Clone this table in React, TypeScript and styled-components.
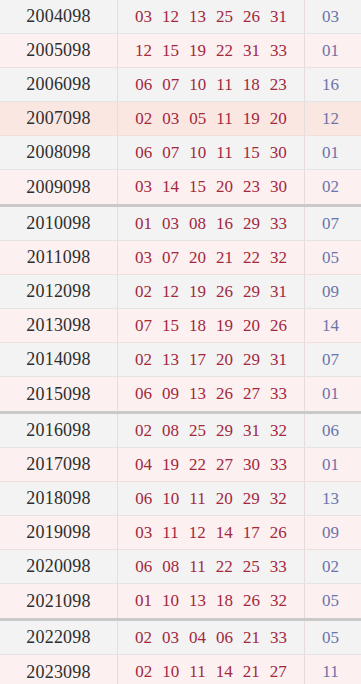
import React from "react";
import styled, { createGlobalStyle } from "styled-components";

type Tone = "gray" | "pink" | "peach";

interface Draw {
  issue: string;
  reds: string[];
  blue: string;
  hot?: boolean;
}

const GlobalStyle = createGlobalStyle`
  html, body {
    margin: 0;
    padding: 0;
    background: #ffffff;
    overflow: hidden;
  }
`;

const Table = styled.div`
  width: 361px;
  font-family: "Liberation Serif", "Noto Sans CJK SC", serif;
  font-size: 17px;
`;

const Group = styled.div`
  & + & {
    border-top: 3px solid #c9c9c9;
  }
`;

const toneColor = (tone: Tone) =>
  tone === "peach" ? "#fbe7e2" : tone === "pink" ? "#fdf0f0" : "#f3f3f3";

const Row = styled.div<{ $tone: Tone }>`
  display: grid;
  grid-template-columns: 118px 187px 1fr;
  height: 34px;
  box-sizing: border-box;
  background: ${(p) => toneColor(p.$tone)};
  border-bottom: 1px solid ${(p) => (p.$tone === "gray" ? "#e4e4e4" : "#f1dede")};

  ${Group} &:last-child {
    border-bottom: none;
  }
`;

const Cell = styled.div`
  display: flex;
  align-items: center;
  justify-content: center;
  border-right: 1px solid #e6dcdc;

  &:last-child {
    border-right: none;
  }
`;

const Issue = styled(Cell)`
  color: #2e2e2e;
  font-size: 18px;
  letter-spacing: 0.2px;
`;

const Reds = styled(Cell)`
  gap: 10px;
  color: #a2283e;
`;

const Blue = styled(Cell)`
  padding-right: 5px;
  color: #6c74aa;
`;

const groups: Draw[][] = [
  [
    { issue: "2004098", reds: ["03", "12", "13", "25", "26", "31"], blue: "03" },
    { issue: "2005098", reds: ["12", "15", "19", "22", "31", "33"], blue: "01" },
    { issue: "2006098", reds: ["06", "07", "10", "11", "18", "23"], blue: "16" },
    { issue: "2007098", reds: ["02", "03", "05", "11", "19", "20"], blue: "12", hot: true },
    { issue: "2008098", reds: ["06", "07", "10", "11", "15", "30"], blue: "01" },
    { issue: "2009098", reds: ["03", "14", "15", "20", "23", "30"], blue: "02" },
  ],
  [
    { issue: "2010098", reds: ["01", "03", "08", "16", "29", "33"], blue: "07" },
    { issue: "2011098", reds: ["03", "07", "20", "21", "22", "32"], blue: "05" },
    { issue: "2012098", reds: ["02", "12", "19", "26", "29", "31"], blue: "09" },
    { issue: "2013098", reds: ["07", "15", "18", "19", "20", "26"], blue: "14" },
    { issue: "2014098", reds: ["02", "13", "17", "20", "29", "31"], blue: "07" },
    { issue: "2015098", reds: ["06", "09", "13", "26", "27", "33"], blue: "01" },
  ],
  [
    { issue: "2016098", reds: ["02", "08", "25", "29", "31", "32"], blue: "06" },
    { issue: "2017098", reds: ["04", "19", "22", "27", "30", "33"], blue: "01" },
    { issue: "2018098", reds: ["06", "10", "11", "20", "29", "32"], blue: "13" },
    { issue: "2019098", reds: ["03", "11", "12", "14", "17", "26"], blue: "09" },
    { issue: "2020098", reds: ["06", "08", "11", "22", "25", "33"], blue: "02" },
    { issue: "2021098", reds: ["01", "10", "13", "18", "26", "32"], blue: "05" },
  ],
  [
    { issue: "2022098", reds: ["02", "03", "04", "06", "21", "33"], blue: "05" },
    { issue: "2023098", reds: ["02", "10", "11", "14", "21", "27"], blue: "11" },
  ],
];

const App = (): JSX.Element => {
  return (
    <>
      <GlobalStyle />
      <Table>
        {groups.map((group, gi) => (
          <Group key={gi}>
            {group.map((d, i) => (
              <Row key={d.issue} $tone={d.hot ? "peach" : i % 2 ? "pink" : "gray"}>
                <Issue>{d.issue}</Issue>
                <Reds>
                  {d.reds.map((n, k) => (
                    <span key={k}>{n}</span>
                  ))}
                </Reds>
                <Blue>{d.blue}</Blue>
              </Row>
            ))}
          </Group>
        ))}
      </Table>
    </>
  );
};

export default App;
